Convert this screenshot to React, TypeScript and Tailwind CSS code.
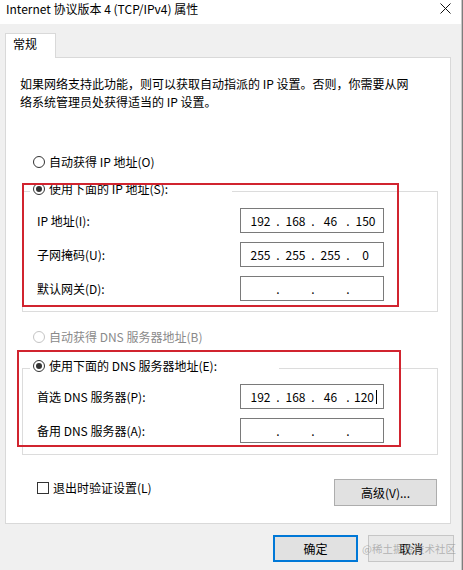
import React from 'react';

const Radio = ({ label, checked = false, disabled = false }: { label: string; checked?: boolean; disabled?: boolean }) => (
  <div className="flex items-center h-[18px]">
    <span
      className={`w-[12px] h-[12px] rounded-full border bg-white flex items-center justify-center ${
        disabled ? 'border-[#c4c4c4]' : 'border-[#333333]'
      }`}
    >
      {checked && <span className="w-[6px] h-[6px] rounded-full bg-[#333333]" />}
    </span>
    <span className={`ml-[4px] whitespace-nowrap ${disabled ? 'text-[#8a8a8a]' : 'text-black'}`}>{label}</span>
  </div>
);

const IpBox = ({ parts, cursor = false }: { parts: string[]; cursor?: boolean }) => (
  <div className="w-[144px] h-[25px] border border-[#7a7a7a] bg-white flex items-center pl-[4px]">
    {parts.map((p, i) => (
      <React.Fragment key={i}>
        {i > 0 && <span className="w-[4px] flex justify-center">.</span>}
        <span className="w-[31px] flex justify-center items-center">
          {p}
          {cursor && i === 3 && <span className="ml-[2px] w-px h-[14px] bg-black" />}
        </span>
      </React.Fragment>
    ))}
  </div>
);

const Row = ({ label, parts, cursor }: { label: string; parts: string[]; cursor?: boolean }) => (
  <div className="flex items-center h-[25px] pl-[14px]">
    <span className="w-[203px] whitespace-nowrap">{label}</span>
    <IpBox parts={parts} cursor={cursor} />
  </div>
);

export default function App() {
  return (
    <div className="relative w-[463px] h-[570px] overflow-hidden flex bg-[#f0f0f0] text-[12px] leading-[18px] text-black font-['Noto_Sans_CJK_SC','Noto_Sans',sans-serif]">
      <div className="w-[461px] flex flex-col">
        {/* title bar */}
        <div className="h-[24px] bg-white flex items-start justify-between pl-[6px] pr-[10px]">
          <span className="whitespace-nowrap">Internet 协议版本 4 (TCP/IPv4) 属性</span>
          <svg width="11" height="11" viewBox="0 0 11 11" className="mt-[3px]">
            <path d="M0.5 0.5 L10.5 10.5 M10.5 0.5 L0.5 10.5" stroke="#111" strokeWidth="1" />
          </svg>
        </div>

        {/* tab */}
        <div className="ml-[5px] mt-[9px] relative z-10 -mb-px w-[51px] h-[25px] bg-white border border-b-0 border-[#d9d9d9] pl-[7px] pt-px">
          常规
        </div>

        {/* tab panel */}
        <div className="ml-[5px] w-[446px] h-[467px] bg-white border border-[#d9d9d9] flex flex-col">
          <div className="ml-[14px] mt-[17px]">
            <div className="whitespace-nowrap">如果网络支持此功能，则可以获取自动指派的 IP 设置。否则，你需要从网</div>
            <div className="whitespace-nowrap">络系统管理员处获得适当的 IP 设置。</div>
          </div>

          <div className="ml-[27px] mt-[42px]">
            <Radio label="自动获得 IP 地址(O)" />
          </div>

          <fieldset className="ml-[16px] mt-[9px] w-[416px] border border-[#dcdcdc] pb-[10px]">
            <legend className="ml-[7px] w-[202px] pl-[3px] pb-[5px] bg-white">
              <Radio label="使用下面的 IP 地址(S):" checked />
            </legend>
            <div className="pt-[5px] flex flex-col gap-[9px]">
              <Row label="IP 地址(I):" parts={['192', '168', '46', '150']} />
              <Row label="子网掩码(U):" parts={['255', '255', '255', '0']} />
              <Row label="默认网关(D):" parts={['', '', '', '']} />
            </div>
          </fieldset>

          <div className="ml-[27px] mt-[16px]">
            <Radio label="自动获得 DNS 服务器地址(B)" disabled />
          </div>

          <fieldset className="ml-[16px] mt-[11px] w-[416px] border border-[#dcdcdc] pb-[11px]">
            <legend className="ml-[7px] w-[249px] pl-[3px] pb-[5px] bg-white">
              <Radio label="使用下面的 DNS 服务器地址(E):" checked />
            </legend>
            <div className="pt-[4px] flex flex-col gap-[9px]">
              <Row label="首选 DNS 服务器(P):" parts={['192', '168', '46', '120']} cursor />
              <Row label="备用 DNS 服务器(A):" parts={['', '', '', '']} />
            </div>
          </fieldset>

          <div className="ml-[31px] mt-[24px] w-[400px] flex items-start justify-between">
            <div className="flex items-center h-[18px]">
              <span className="w-[12px] h-[12px] border border-[#333333] bg-white" />
              <span className="ml-[4px] whitespace-nowrap">退出时验证设置(L)</span>
            </div>
            <button className="w-[103px] h-[27px] bg-[#e1e1e1] border border-[#adadad] flex items-center justify-center">
              高级(V)...
            </button>
          </div>
        </div>

        {/* dialog buttons */}
        <div className="mt-[11px] pr-[7px] flex justify-end gap-[10px]">
          <button className="w-[85px] h-[27px] bg-[#e1e1e1] border-2 border-[#0078d7] flex items-center justify-center">
            确定
          </button>
          <button className="w-[86px] h-[27px] bg-[#e8e8e8] border border-[#c6c6c6] flex items-center justify-center">
            取消
          </button>
        </div>
      </div>
      <div className="w-[2px] h-full bg-[#7d7d7d] border-l border-[#c8c8c8]" />

      {/* red annotation frames */}
      <div className="absolute left-[22px] top-[183px] w-[377px] h-[124px] border-2 border-[#d1242f] pointer-events-none" />
      <div className="absolute left-[17px] top-[350px] w-[384px] h-[97px] border-2 border-[#d1242f] pointer-events-none" />

      {/* watermark */}
      <span className="absolute left-[362px] top-[542px] text-[10.5px] leading-[14px] text-[#8c8c8c]/60 whitespace-nowrap pointer-events-none">
        @稀土掘金技术社区
      </span>
    </div>
  );
}
